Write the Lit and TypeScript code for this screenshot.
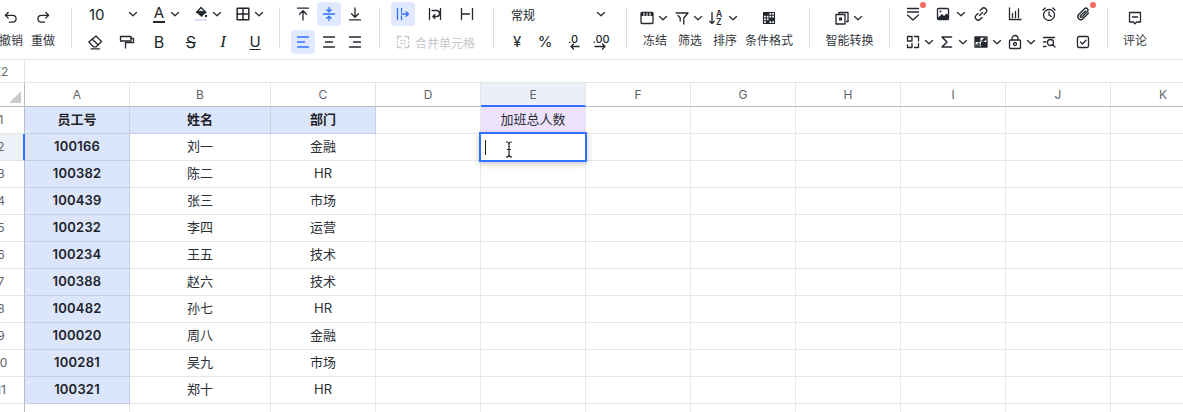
import { LitElement, html, css, svg, nothing } from "lit";
import { customElement } from "lit/decorators.js";

const ic = (body: unknown, cls = "") => html`<svg class="i ${cls}" viewBox="0 0 16 16" width="16" height="16" fill="none" stroke="currentColor" stroke-width="1.3" stroke-linecap="round" stroke-linejoin="round">${body}</svg>`;
const chev = html`<svg class="ch" viewBox="0 0 16 16" width="16" height="16" fill="none" stroke="currentColor" stroke-width="1.2" stroke-linecap="round" stroke-linejoin="round"><path d="M4.500 6.500 8 9.800l3.500-3.300"/></svg>`;

const I: Record<string, unknown> = {
  undo: svg`<path d="M5.200 2.500 2.400 5.300l2.800 2.800M2.600 5.300h7a3.400 3.400 0 0 1 0 6.900H6.400"/>`,
  redo: svg`<path d="M10.800 2.500l2.800 2.800-2.800 2.800M13.400 5.300h-7a3.400 3.400 0 0 0 0 6.900h3.200"/>`,
  fill: svg`<path d="M8 1.500 13 6.500 8.500 11 3.500 6.500z" fill="currentColor" stroke="none"/><path d="M8 1.500 13 6.500 8 5.500 3.500 6.500z" fill="#fff" stroke="currentColor"/><circle cx="13" cy="10" r="1.200" fill="currentColor" stroke="none"/><rect x="2" y="13" width="12" height="2" fill="#e6dcf5" stroke="none"/>`,
  border: svg`<rect x="2.200" y="2.200" width="11.600" height="11.600" stroke-width="1.500"/><path d="M8 2.200v11.600M2.200 8h11.600" stroke-width="1.500"/>`,
  eraser: svg`<path d="M9 2 14.500 7.500 9.300 12.800H6.500L1.800 8z"/><path d="M5.300 5.200 11 10.800M4 14.800h8.500"/>`,
  paint: svg`<rect x="1.500" y="2.500" width="10.500" height="4.500"/><path d="M12 4.500h2.500v4H6.500v5.500"/>`,
  top: svg`<path d="M2.500 2.200h11M8 14V5M4.500 8.300 8 4.800l3.500 3.500"/>`,
  mid: svg`<path d="M2.500 8h11M8 1.500v4M5.800 3.700 8 5.800l2.200-2.100M8 14.500v-4M5.800 12.300 8 10.200l2.200 2.100"/>`,
  bot: svg`<path d="M2.500 13.800h11M8 2v9M4.500 7.700 8 11.200l3.500-3.500"/>`,
  al: svg`<path d="M2.500 3h11M2.500 8h7M2.500 13h11"/>`,
  ac: svg`<path d="M2.500 3h11M4.500 8h7M2.500 13h11"/>`,
  ar: svg`<path d="M2.500 3h11M6.500 8h7M2.500 13h11"/>`,
  over: svg`<path d="M2.500 2.500v11M6.500 2.500v3.500M6.500 10v3.500M6.500 8h7M11 5.800 13.500 8 11 10.200"/>`,
  wrap: svg`<path d="M2.500 2.500v11M13.500 2.500v11M5 4.500h4.500a2.500 2.500 0 0 1 0 6H6M7.800 8.500 5.800 10.500l2 2"/>`,
  clip: svg`<path d="M2.500 2.500v11M13.500 2.500v11M2.500 8h8"/>`,
  merge: svg`<path d="M2.500 5V2.500H6M10 2.500h3.500V5M2.500 11v2.500H6M10 13.500h3.500V11M2.500 7.500v1M13.500 7.500v1M6 6.500h.8M9.200 6.500h.8M6 9.500h.8M9.200 9.500h.8"/>`,
  dl: svg`<path d="M14 12.500H6M8.500 10 6 12.500 8.500 15"/>`,
  dr: svg`<path d="M2 12.500h10M9.500 10l2.500 2.500L9.500 15"/>`,
  freeze: svg`<rect x="2" y="2.500" width="12" height="11" rx="1"/><path d="M2 3h12v3H2z" fill="currentColor" stroke="none"/><path d="M5 3.200v2.600M8 3.200v2.600M11 3.200v2.600" stroke="#fff" stroke-width="1"/>`,
  filter: svg`<path d="M2 3h12L9.800 8v6M6.200 11V8L4 5.500"/>`,
  sort: svg`<path d="M4 2.500v11M1.800 11.300 4 13.500l2.200-2.200"/>`,
  cond: svg`<rect x="2.500" y="2.500" width="11" height="11" stroke-width="1.100"/><path d="M5.250 2.500v11M8 2.500v11M10.750 2.500v11M2.500 5.250h11M2.500 8h11M2.500 10.750h11" stroke-width="1"/><path d="M2.500 2.500h5.500v2.750H2.500zM8 8h5.500v2.750H8zM5.250 10.750H8v2.750H5.250z" fill="currentColor" stroke="none"/>`,
  smart: svg`<path d="M5 4V2.500h9v9h-1.500"/><rect x="2" y="4.500" width="9" height="9.500" stroke-width="1.300"/><rect x="5" y="7.500" width="3" height="3" fill="currentColor" stroke="none"/>`,
  layers: svg`<path d="M2.500 2.500h11M2.500 6h11M2.500 9 8 14l5.500-5"/>`,
  image: svg`<rect x="2.500" y="2.500" width="11" height="11" rx="1"/><path d="M2.500 12 7 8l2 2 2.500-2.500 2 2V13.500h-11z" fill="currentColor" stroke="none"/><circle cx="5.500" cy="5.500" r="1" fill="currentColor" stroke="none"/>`,
  link: svg`<path d="M6.500 9.500 9.500 6.500M7 4.500l1.800-1.800a2.800 2.800 0 0 1 4 4L11 8.500M9 11.500l-1.800 1.800a2.800 2.800 0 0 1-4-4L5 7.500"/>`,
  chart: svg`<path d="M2.500 2v11.500h11.500M5.500 7.500v4M8.500 5.500v6M11.500 3v8.500"/>`,
  clock: svg`<circle cx="8" cy="9" r="5.500"/><path d="M8 6v3.200l2.200 1.200M2 4 4.200 2M14 4l-2.200-2"/>`,
  clipper: svg`<path d="M13.500 7 8 12.700a3 3 0 0 1-4.300-4.200L9.500 2.700a2 2 0 0 1 2.900 2.800L6.800 11.200a1 1 0 0 1-1.400-1.400L10.500 5"/>`,
  form: svg`<path d="M7 2.500H2.500V7H7zM9.500 2.500h4V7M13.500 9.500v4h-4M7 9.500v4H2.500V11"/>`,
  sigma: svg`<path d="M12.500 3H3l5 5-5 5h9.500" stroke-width="1.500"/>`,
  pattern: svg`<rect x="2" y="3" width="12" height="10"/><path d="M2 3h5.500v5H2zM8 8h6v5H8z" fill="currentColor" stroke="none"/><path d="M9 7l3-3M10.500 7 13 5M3 12l3-3M5 12.500l2-2"/>`,
  lock: svg`<rect x="2.500" y="6" width="11" height="8.500" rx="1"/><path d="M5 6V4.500a3 3 0 0 1 6 0V6"/><circle cx="8" cy="10" r="1.500"/>`,
  find: svg`<path d="M2.500 3.500h11M2.500 8h2.500M2.500 12.500h2.500"/><circle cx="9.500" cy="8.500" r="3"/><path d="M11.700 10.700 14 13"/>`,
  check: svg`<rect x="2.500" y="2.500" width="11" height="11" rx="1.500"/><path d="M5.500 8 7.500 10l3.500-3.800"/>`,
  comment: svg`<path d="M2.500 2.500h11v9.500H9.500L8 13.800 6.500 12h-4z"/><path d="M5.500 7h5" stroke-width="1.500"/>`,
};

const COLS = ["A", "B", "C", "D", "E", "F", "G", "H", "I", "J", "K"];
const ROWS: [string, string, string][] = [
  ["员工号", "姓名", "部门"],
  ["100166", "刘一", "金融"],
  ["100382", "陈二", "HR"],
  ["100439", "张三", "市场"],
  ["100232", "李四", "运营"],
  ["100234", "王五", "技术"],
  ["100388", "赵六", "技术"],
  ["100482", "孙七", "HR"],
  ["100020", "周八", "金融"],
  ["100281", "吴九", "市场"],
  ["100321", "郑十", "HR"],
  ["", "", ""],
];

@customElement("app-root")
export class AppRoot extends LitElement {
  static styles = css`
    :host { display: block; width: 1183px; height: 412px; overflow: hidden; background: #fff; position: relative;
      font-family: Inter, "Noto Sans CJK SC", "Noto Sans", sans-serif; color: #1f2329; }
    .tb { display: flex; align-items: flex-start; height: 59px; border-bottom: 1px solid #e4e5e7; box-sizing: content-box; color: #23272e; }
    .sep { flex: none; width: 1px; height: 40px; margin-top: 8px; background: #dcdee1; }
    .g { flex: none; box-sizing: border-box; height: 59px; padding-top: 2px; display: flex; flex-direction: column; gap: 4px; }
    .g.tall { padding-top: 0; flex-direction: row; gap: 0; }
    .r { display: flex; height: 24px; align-items: center; }
    .i, .ch { flex: none; display: block; }
    .c { flex: none; width: 24px; height: 24px; display: flex; align-items: center; justify-content: center; border-radius: 4px; position: relative; }
    .c.on { background: #e0e9ff; color: #3370ff; }
    .p { flex: none; display: flex; align-items: center; width: 32px; }
    .t { flex: none; display: flex; flex-direction: column; align-items: center; padding-top: 10px; width: 32px; }
    .t .top { display: flex; height: 16px; align-items: center; }
    .t span.l { margin-top: 6px; font-size: 12px; line-height: 18px; white-space: nowrap; color: #33373d; }
    .g1 { width: 76px; margin-left: -5px; }
    .g2 { width: 207px; padding-left: 7px; }
    .g3 { width: 99px; padding-left: 11px; }
    .g3 .r { gap: 2px; }
    .g4 { width: 113px; padding-left: 11px; }
    .g4 .r { gap: 8px; }
    .g4 .mr { gap: 0; color: #c4c7cc; font-size: 12px; }
    .g5 { width: 132px; padding-left: 11px; }
    .g5 .r { gap: 4px; }
    .sel { display: flex; align-items: center; justify-content: space-between; width: 104px; padding-left: 6px; box-sizing: border-box; font-size: 12px; }
    .fs { display: flex; align-items: center; justify-content: space-between; width: 62px; padding-left: 10px; box-sizing: border-box; font-size: 15px; margin-right: 10px; }
    .g.tall.g6 { width: 182px; padding-left: 12px; gap: 3px; }
    .g6 .w { width: 48px; margin-left: 1px; }
    .g.tall.g7 { width: 79px; justify-content: center; }
    .g8 { width: 217px; padding-left: 13px; }
    .g8 .r { gap: 2px; }
    .g8 .p .i { margin-left: 2px; }
    .g8 .p.b .i { margin-left: -2px; }
    .g8 .p.b .ch { margin-left: 2px; }
    .g.tall.g9 { width: 75px; padding-left: 11px; }
    .pi { position: relative; display: block; flex: none; width: 16px; height: 16px; }
    .pi .i { margin-left: 0 !important; }
    .dot { position: absolute; left: 15px; top: -4px; width: 6px; height: 6px; border-radius: 50%; background: #f76964; }
    .glyph { width: 16px; height: 24px; display: flex; align-items: center; justify-content: center; font-size: 16px; line-height: 16px; }
    .a { flex-direction: column; }
    .a b { font-weight: 400; font-size: 15px; line-height: 16px; }
    .a i { display: block; width: 12px; height: 2px; background: #23272e; }
    .st { text-decoration: line-through; }
    .it { font-style: italic; font-family: "Liberation Serif", serif; font-size: 17px; }
    .un { text-decoration: underline; text-underline-offset: 2px; font-size: 15px; }
    .num { font-size: 14px; position: relative; width: 24px; height: 24px; display: flex; align-items: flex-start; justify-content: center; }
    .num span { font-size: 11px; font-weight: 500; line-height: 14px; margin-top: 2px; }
    .num svg { position: absolute; left: 4px; top: 4px; }
    .pl { font-size: 15px; }
    .az { position: relative; width: 16px; height: 16px; display: block; flex: none; }
    .az svg { position: absolute; left: -1px; top: 0; }
    .az span { position: absolute; left: 7px; font-size: 8.5px; font-weight: 600; line-height: 8px; }
    .az .z1 { top: 0; }
    .az .z2 { top: 8px; }
    .fx { display: flex; height: 22px; border-bottom: 1px solid #e4e5e7; box-sizing: content-box; }
    .fx .nm { flex: none; width: 24px; border-right: 1px solid #e4e5e7; box-sizing: content-box; display: flex; justify-content: center; align-items: center; overflow: visible; font-size: 12px; color: #6b7078; }
    .fx .nm span { margin-left: -22px; white-space: nowrap; }
    .grid { display: grid; grid-template-columns: 25px 105px 141px repeat(8, 105px) 105px; grid-auto-rows: 27px; grid-template-rows: 24px; width: 1296px; }
    .hc { box-sizing: border-box; display: flex; align-items: center; justify-content: center; font-size: 12px; color: #5f646b; border-right: 1px solid #e4e5e7; border-bottom: 1px solid #b9bcc2; }
    .hc.active { background: #ebeff8; border-bottom: 2px solid #3370ff; }
    .corner { position: relative; justify-content: flex-start; border-right-color: #b9bcc2; }
    .tri { position: absolute; left: 9px; top: 8px; width: 0; height: 0; border-left: 12px solid transparent; border-bottom: 12px solid #c9cbcf; }
    .rh { box-sizing: border-box; display: flex; align-items: center; font-size: 12px; color: #5f646b; border-right: 1px solid #b9bcc2; border-bottom: 1px solid #e4e5e7; position: relative; padding-bottom: 1px; }
    .rh span { width: 2px; display: flex; justify-content: center; white-space: nowrap; }
    .rh.active { background: #eef1f8; border-right: 2px solid #3370ff; }
    .cell { box-sizing: border-box; display: flex; align-items: center; justify-content: center; font-size: 13px; border-right: 1px solid #e6e7e9; border-bottom: 1px solid #e6e7e9; color: #2b2f36; position: relative; padding-bottom: 3px; }
    .cell.h { background: #dbe6fd; font-weight: 600; color: #1f2329; border-color: #c4d0e8; }
    .cell.k { background: #dbe6fd; font-weight: 600; letter-spacing: .2px; color: #1f2329; border-color: #c4d0e8; }
    .cell.pu { background: #ede2fb; }
    .edit { position: absolute; left: -2px; top: -2px; right: -2px; bottom: -2px; box-sizing: border-box; border: 2px solid #3370ff; background: #fff; box-shadow: 0 2px 6px rgba(0,0,0,.22); z-index: 2; }
    .caret { position: absolute; left: 4px; top: 6px; width: 1px; height: 15px; background: #1f2329; }
    .beam { position: absolute; left: 20px; top: 7px; }
  `;

  private chip(k: string, on = false) {
    return html`<div class="c ${on ? "on" : ""}">${ic(I[k])}</div>`;
  }

  private pick(k: string, cls = "") {
    return html`<div class="p ${cls}">${ic(I[k])}${chev}</div>`;
  }

  private badged(k: string) {
    return html`<div class="p"><span class="pi" style="margin-left:2px">${ic(I[k])}<span class="dot"></span></span></div>`;
  }

  private solo(k: string) {
    return html`<div class="p">${ic(I[k])}</div>`;
  }

  private glyph(t: string, cls: string) {
    return html`<div class="c"><span class="glyph ${cls}">${t}</span></div>`;
  }

  private tall(top: unknown, label: string, cls = "") {
    return html`<div class="t ${cls}"><div class="top">${top}</div><span class="l">${label}</span></div>`;
  }

  render() {
    const az = html`<span class="az">${ic(I.sort)}<span class="z1">A</span><span class="z2">Z</span></span>`;
    return html`
      <div class="tb">
        <div class="g tall g1">${this.tall(ic(I.undo), "撤销")}${this.tall(ic(I.redo), "重做")}</div>
        <div class="sep"></div>
        <div class="g g2">
          <div class="r">
            <div class="fs"><span>10</span>${chev}</div>
            <div class="p" style="margin-right:10px"><span class="glyph a"><b>A</b><i></i></span>${chev}</div>
            <div class="p" style="margin-right:10px">${ic(I.fill)}${chev}</div>
            <div class="p">${ic(I.border)}${chev}</div>
          </div>
          <div class="r" style="gap:8px;margin-left:4px">
            ${this.chip("eraser")}${this.chip("paint")}
            ${this.glyph("B", "")}${this.glyph("S", "st")}${this.glyph("I", "it")}${this.glyph("U", "un")}
          </div>
        </div>
        <div class="sep"></div>
        <div class="g g3">
          <div class="r">${this.chip("top")}${this.chip("mid", true)}${this.chip("bot")}</div>
          <div class="r">${this.chip("al", true)}${this.chip("ac")}${this.chip("ar")}</div>
        </div>
        <div class="sep"></div>
        <div class="g g4">
          <div class="r">${this.chip("over", true)}${this.chip("wrap")}${this.chip("clip")}</div>
          <div class="r mr">${this.chip("merge")}<span>合并单元格</span></div>
        </div>
        <div class="sep"></div>
        <div class="g g5">
          <div class="r"><div class="sel"><span>常规</span>${chev}</div></div>
          <div class="r">
            ${this.glyph("¥", "pl")}
            ${this.glyph("%", "pl")}
            <div class="num"><span>.0</span>${ic(I.dl)}</div>
            <div class="num"><span>.00</span>${ic(I.dr)}</div>
          </div>
        </div>
        <div class="sep"></div>
        <div class="g tall g6">
          ${this.tall(html`${ic(I.freeze)}${chev}`, "冻结")}
          ${this.tall(html`${ic(I.filter)}${chev}`, "筛选")}
          ${this.tall(html`${az}${chev}`, "排序")}
          ${this.tall(ic(I.cond), "条件格式", "w")}
        </div>
        <div class="sep"></div>
        <div class="g tall g7">${this.tall(html`${ic(I.smart)}${chev}`, "智能转换")}</div>
        <div class="sep"></div>
        <div class="g g8">
          <div class="r">
            ${this.badged("layers")}${this.pick("image", "b")}${this.solo("link")}${this.solo("chart")}${this.solo("clock")}${this.badged("clipper")}
          </div>
          <div class="r">
            ${this.pick("form")}${this.pick("sigma")}${this.pick("pattern")}${this.pick("lock")}${this.solo("find")}${this.solo("check")}
          </div>
        </div>
        <div class="sep"></div>
        <div class="g tall g9">${this.tall(ic(I.comment), "评论")}</div>
      </div>
      <div class="fx"><div class="nm"><span>E2</span></div></div>
      <div class="grid">
        <div class="hc corner"><div class="tri"></div></div>
        ${COLS.map((c) => html`<div class="hc ${c === "E" ? "active" : ""}">${c}</div>`)}
        ${ROWS.map((row, i) => html`
          <div class="rh ${i === 1 ? "active" : ""}"><span>${i + 1}</span></div>
          ${COLS.map((_, j) => {
            const text = row[j] ?? "";
            const filled = text !== "";
            let cls = "";
            if (i === 0 && j < 3) cls = "h";
            else if (j === 0 && filled) cls = "k";
            if (i === 0 && j === 4) cls = "pu";
            return html`<div class="cell ${cls}">${i === 0 && j === 4 ? "加班总人数" : text}${i === 1 && j === 4
              ? html`<div class="edit"><div class="caret"></div><svg class="beam" width="16" height="17" viewBox="0 0 16 17" fill="none" stroke="#1f2329" stroke-width="1.2"><path d="M5 1c1.500 0 3 .5 3 2v11c0 1.500-1.500 2-3 2M11 1c-1.500 0-3 .5-3 2v11c0 1.500 1.500 2 3 2M6 8.500h4"/></svg></div>`
              : nothing}</div>`;
          })}
        `)}
      </div>
    `;
  }
}
